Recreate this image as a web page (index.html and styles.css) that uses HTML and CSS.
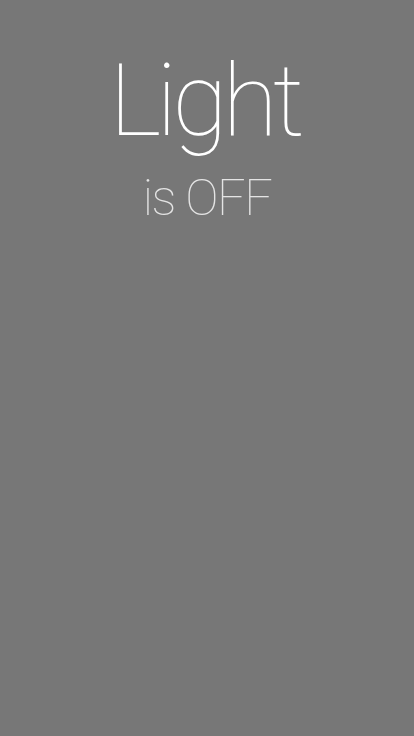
FILE: index.html
```html
<!DOCTYPE html>
<html>
<head>
<meta charset="utf-8">
<link rel="stylesheet" href="styles.css">
</head>
<body>
<main class="screen">
  <h1 class="title">Light</h1>
  <p class="status">is OFF</p>
</main>
</body>
</html>
```
FILE: styles.css
```css
html, body {
  margin: 0;
  padding: 0;
  background: #777777;
}
.screen {
  width: 414px;
  height: 736px;
  box-sizing: border-box;
  display: flex;
  flex-direction: column;
  align-items: center;
  padding-top: 41px;
  font-family: Roboto, "Liberation Sans", sans-serif;
}
.title {
  margin: 0;
  font-weight: 100;
  font-size: 101px;
  line-height: 120px;
  color: #ffffff;
  letter-spacing: -5px;
  text-indent: -5px;
}
.status {
  margin: 7px 0 0;
  font-weight: 100;
  font-size: 50px;
  line-height: 60px;
  color: #e4e4e4;
  letter-spacing: -1.5px;
}
```
